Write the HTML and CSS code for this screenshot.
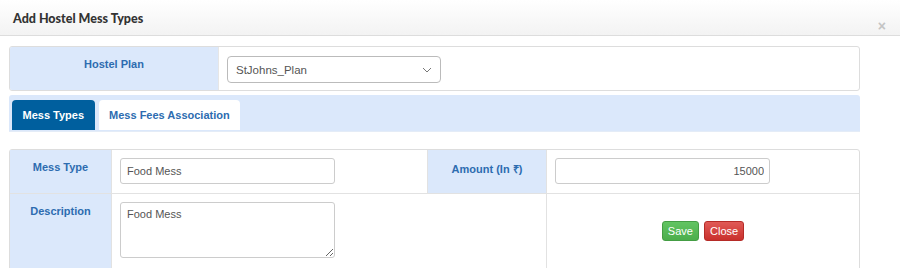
FILE: index.html
```html
<!DOCTYPE html>
<html lang="en">
<head>
  <meta charset="UTF-8" />
  <title>Add Hostel Mess Types</title>
  <link rel="stylesheet" href="styles.css">
</head>
<body>
  <div class="modal-header">
    <h4>Add Hostel Mess Types</h4>
    <span class="close-x">&times;</span>
  </div>

  <div class="modal-body">
    <!-- Hostel plan selector -->
    <div class="plan-panel">
      <div class="label-cell plan-label">Hostel Plan</div>
      <div class="plan-value">
        <div class="select-box">
          <span>StJohns_Plan</span>
          <svg width="10" height="6" viewBox="0 0 10 6"><path d="M1 1 L5 5 L9 1" fill="none" stroke="#777" stroke-width="1"/></svg>
        </div>
      </div>
    </div>

    <!-- Tabs -->
    <div class="tab-bar">
      <div class="tab active">Mess Types</div>
      <div class="tab">Mess Fees Association</div>
    </div>

    <!-- Form table -->
    <table class="form-table">
      <tr class="row-one">
        <td class="label-cell col-a">Mess Type</td>
        <td class="col-b"><input class="text-input" type="text" value="Food Mess"></td>
        <td class="label-cell col-c">Amount (In ₹)</td>
        <td class="col-d"><input class="text-input amount" type="text" value="15000"></td>
      </tr>
      <tr class="row-two">
        <td class="label-cell">Description</td>
        <td colspan="2"><textarea class="text-area">Food Mess</textarea></td>
        <td class="actions">
          <button class="btn save">Save</button>
          <button class="btn close">Close</button>
        </td>
      </tr>
    </table>
  </div>
</body>
</html>
```

FILE: styles.css
```css
body {
  margin: 0;
  background: #fff;
  font-family: "Liberation Sans", Arial, sans-serif;
  font-size: 11px;
  color: #555;
}

.modal-header {
  height: 35px;
  background: linear-gradient(to bottom, #fff, #f3f3f3);
  border-bottom: 1px solid #ddd;
  display: flex;
  align-items: center;
  justify-content: space-between;
  padding: 0 14px 0 13px;
}

.modal-header h4 {
  margin: 0;
  font-family: Lato, "Open Sans", sans-serif;
  font-size: 12.5px;
  font-weight: 900;
  color: #333;
  padding-top: 1px;
}

.close-x {
  color: #c4c4c4;
  font-size: 14px;
  font-weight: bold;
  margin-top: 16px;
}

.modal-body {
  width: 851px;
  padding: 10px 0 0 9px;
}

.label-cell {
  background: #dbe8fb;
  color: #2d6cb0;
  font-weight: bold;
  text-align: center;
}

/* Hostel plan */
.plan-panel {
  display: flex;
  height: 43px;
  border: 1px solid #ddd;
  border-radius: 3px;
  overflow: hidden;
}

.plan-label {
  width: 208px;
  padding-top: 11px;
  border-right: 1px solid #e6e6e6;
}

.plan-value {
  padding: 9px 0 0 8px;
}

.select-box {
  width: 196px;
  height: 25px;
  border: 1px solid #bbb;
  border-radius: 4px;
  display: flex;
  align-items: center;
  justify-content: space-between;
  padding: 0 8px;
  color: #555;
  font-size: 11.5px;
}

/* Tabs */
.tab-bar {
  margin-top: 4px;
  height: 31px;
  padding: 5px 0 0 3px;
  background: #dbe8fb;
  border-radius: 3px 3px 0 0;
  border-bottom: 1px solid #e4ecf7;
  display: flex;
  gap: 4px;
}

.tab {
  height: 30px;
  line-height: 30px;
  padding: 0 10.5px;
  background: #fff;
  color: #2d6cb0;
  font-weight: bold;
  border-radius: 4px 4px 0 0;
  white-space: nowrap;
}

.tab.active {
  background: #005f9e;
  color: #fff;
}

/* Form table */
.form-table {
  margin-top: 17px;
  width: 851px;
  border-collapse: separate;
  border-spacing: 0;
  border: 1px solid #ddd;
  border-radius: 3px;
}

.form-table td {
  vertical-align: top;
  padding: 0;
  border-right: 1px solid #e2e2e2;
}

.form-table td:last-child {
  border-right: none;
}

.row-one td {
  height: 43px;
  border-bottom: 1px solid #e2e2e2;
}

.row-one .label-cell,
.row-two .label-cell {
  padding-top: 11px;
  height: 32px;
}

.row-two td {
  height: 74px;
}

.row-two .label-cell {
  height: 63px;
}

.col-a { width: 101px; }
.col-b { width: 315px; }
.col-c { width: 118px; }

.text-input {
  display: block;
  box-sizing: border-box;
  width: 215px;
  height: 26px;
  margin: 8px 0 0 8px;
  padding: 0 6px;
  border: 1px solid #ccc;
  border-radius: 3px;
  font-family: "Liberation Sans", Arial, sans-serif;
  font-size: 11px;
  color: #555;
}

.amount {
  text-align: right;
  padding-right: 5px;
}

.text-area {
  display: block;
  box-sizing: border-box;
  width: 215px;
  height: 56px;
  margin: 8px 0 0 8px;
  padding: 5px 6px;
  border: 1px solid #ccc;
  border-radius: 3px;
  font-family: "Liberation Sans", Arial, sans-serif;
  font-size: 11px;
  color: #555;
}

.actions {
  text-align: center;
  vertical-align: middle !important;
  padding-bottom: 8px !important;
}

.btn {
  height: 20px;
  padding: 0 5px;
  border-radius: 3px;
  font-family: "Liberation Sans", Arial, sans-serif;
  font-size: 11px;
  color: #fff;
  margin: 0 1px;
  cursor: pointer;
}

.save {
  background: linear-gradient(to bottom, #62c462, #4cae4c);
  border: 1px solid #449d44;
}

.close {
  background: linear-gradient(to bottom, #e05a56, #c9302c);
  border: 1px solid #b52b27;
}
```
